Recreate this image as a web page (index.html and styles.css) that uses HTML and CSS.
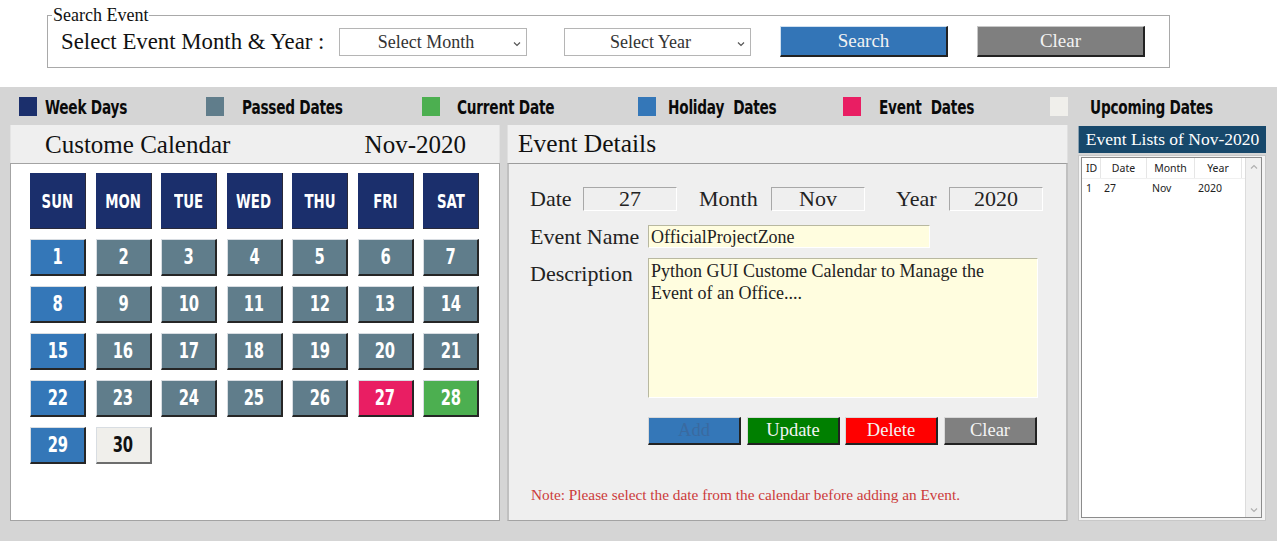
FILE: index.html
```html
<!DOCTYPE html>
<html>
<head>
<meta charset="utf-8">
<title>Custome Calendar</title>
<link rel="stylesheet" href="styles.css">
</head>
<body>
<div class="top">
  <fieldset class="search">
    <legend>Search Event</legend>
    <div class="search-row">
      <span class="search-label">Select Event Month &amp; Year :</span>
      <div class="select sel-month"><span>Select Month</span><svg class="caret" viewBox="0 0 8 6" width="8" height="6"><path d="M1 1.5 L4 4.5 L7 1.5" fill="none" stroke="#555" stroke-width="1.2"/></svg></div>
      <div class="select sel-year"><span>Select Year</span><svg class="caret" viewBox="0 0 8 6" width="8" height="6"><path d="M1 1.5 L4 4.5 L7 1.5" fill="none" stroke="#555" stroke-width="1.2"/></svg></div>
      <button class="btn btn-search">Search</button>
      <button class="btn btn-clear">Clear</button>
    </div>
  </fieldset>
</div>

<div class="lower">
  <div class="legend">
    <div class="lg lg1"><span class="sq c-week"></span><span class="lg-text">Week Days</span></div>
    <div class="lg lg2"><span class="sq c-passed"></span><span class="lg-text">Passed Dates</span></div>
    <div class="lg lg3"><span class="sq c-current"></span><span class="lg-text">Current Date</span></div>
    <div class="lg lg4"><span class="sq c-holiday"></span><span class="lg-text">Holiday&nbsp; Dates</span></div>
    <div class="lg lg5"><span class="sq c-event"></span><span class="lg-text">Event&nbsp; Dates</span></div>
    <div class="lg lg6"><span class="sq c-upcoming"></span><span class="lg-text">Upcoming Dates</span></div>
  </div>

  <div class="main">
    <section class="panel cal">
      <div class="cal-head">
        <span class="cal-title">Custome Calendar</span>
        <span class="cal-month">Nov-2020</span>
      </div>
      <div class="cal-body">
        <div class="grid">
          <div class="wd"><span>SUN</span></div><div class="wd"><span>MON</span></div><div class="wd"><span>TUE</span></div><div class="wd"><span>WED</span></div><div class="wd"><span>THU</span></div><div class="wd"><span>FRI</span></div><div class="wd"><span>SAT</span></div>
          <div class="d c-holiday"><span>1</span></div><div class="d c-passed"><span>2</span></div><div class="d c-passed"><span>3</span></div><div class="d c-passed"><span>4</span></div><div class="d c-passed"><span>5</span></div><div class="d c-passed"><span>6</span></div><div class="d c-passed"><span>7</span></div>
          <div class="d c-holiday"><span>8</span></div><div class="d c-passed"><span>9</span></div><div class="d c-passed"><span>10</span></div><div class="d c-passed"><span>11</span></div><div class="d c-passed"><span>12</span></div><div class="d c-passed"><span>13</span></div><div class="d c-passed"><span>14</span></div>
          <div class="d c-holiday"><span>15</span></div><div class="d c-passed"><span>16</span></div><div class="d c-passed"><span>17</span></div><div class="d c-passed"><span>18</span></div><div class="d c-passed"><span>19</span></div><div class="d c-passed"><span>20</span></div><div class="d c-passed"><span>21</span></div>
          <div class="d c-holiday"><span>22</span></div><div class="d c-passed"><span>23</span></div><div class="d c-passed"><span>24</span></div><div class="d c-passed"><span>25</span></div><div class="d c-passed"><span>26</span></div><div class="d c-event"><span>27</span></div><div class="d c-current"><span>28</span></div>
          <div class="d c-holiday"><span>29</span></div><div class="d c-upcoming"><span>30</span></div>
        </div>
      </div>
    </section>

    <section class="panel details">
      <div class="det-head">Event Details</div>
      <div class="det-body">
        <div class="row-date">
          <span class="lbl l-date">Date</span><span class="field">27</span>
          <span class="lbl l-month">Month</span><span class="field">Nov</span>
          <span class="lbl l-year">Year</span><span class="field">2020</span>
        </div>
        <div class="row-name">
          <span class="lbl l-name">Event Name</span>
          <div class="input name-input">OfficialProjectZone</div>
        </div>
        <div class="row-desc">
          <span class="lbl l-desc">Description</span>
          <div class="input desc-input">Python GUI Custome Calendar to Manage the Event of an Office....</div>
        </div>
        <div class="actions">
          <button class="abtn a-add">Add</button>
          <button class="abtn a-update">Update</button>
          <button class="abtn a-delete">Delete</button>
          <button class="abtn a-clear">Clear</button>
        </div>
        <p class="note">Note: Please select the date from the calendar before adding an Event.</p>
      </div>
    </section>

    <section class="panel list">
      <div class="list-head">Event Lists of Nov-2020</div>
      <div class="list-body">
        <div class="tree">
          <div class="table">
            <div class="th"><span class="col c1">ID</span><span class="col c2 ctr">Date</span><span class="col c3 ctr">Month</span><span class="col c4 ctr">Year</span></div>
            <div class="tr"><span class="col c1">1</span><span class="col c2">27</span><span class="col c3">Nov</span><span class="col c4">2020</span></div>
          </div>
          <div class="scroll">
            <svg viewBox="0 0 8 6" width="8" height="6"><path d="M1 4.5 L4 1.5 L7 4.5" fill="none" stroke="#b0b0b0" stroke-width="1.2"/></svg>
            <svg viewBox="0 0 8 6" width="8" height="6"><path d="M1 1.5 L4 4.5 L7 1.5" fill="none" stroke="#b0b0b0" stroke-width="1.2"/></svg>
          </div>
        </div>
      </div>
    </section>
  </div>
</div>
</body>
</html>
```

FILE: styles.css
```css
* { box-sizing: border-box; }
html, body { margin: 0; padding: 0; }
body {
  width: 1277px;
  height: 541px;
  overflow: hidden;
  background: #d5d5d5;
  font-family: "Liberation Serif", "DejaVu Serif", serif;
  color: #111;
}

/* ---------- top search ---------- */
.top {
  background: #ffffff;
  height: 87px;
  padding: 7px 0 0 47px;
}
.search {
  margin: 0;
  width: 1123px;
  height: 61px;
  border: 1px solid #a9a9a9;
  padding: 0 0 0 13px;
}
.search legend {
  font-size: 18px;
  padding: 0 1px;
  margin-left: -9px;
  color: #111;
  line-height: 16px;
}
.search-row {
  display: flex;
  align-items: center;
  height: 44px;
  margin-top: -3px;
}
.search-label {
  font-size: 22.8px;
  width: 278px;
}
.select {
  height: 28px;
  border: 1px solid #b5b5b5;
  background: #fff;
  display: flex;
  align-items: center;
  justify-content: center;
  position: relative;
  font-size: 18px;
  color: #333;
}
.select span { margin-left: -14px; }
.select .caret { position: absolute; right: 5px; top: 12px; }
.sel-month { width: 188px; }
.sel-year { width: 187px; margin-left: 37px; }
.btn {
  height: 31px;
  width: 168px;
  border: none;
  border-right: 2px solid #222;
  border-bottom: 2px solid #222;
  border-top: 1px solid #cfe0f0;
  border-left: 1px solid #cfe0f0;
  font-family: "Liberation Serif", serif;
  font-size: 19px;
  color: #f2f2f2;
  padding: 0;
  margin-top: -1px;
}
.btn-search { background: #3375b7; margin-left: 29px; }
.btn-clear { background: #7f7f7f; margin-left: 29px; border-top-color: #c8c8c8; border-left-color: #c8c8c8; }

/* ---------- legend ---------- */
.legend {
  display: flex;
  align-items: center;
  height: 38px;
  padding: 1px 0 0 19px;
}
.lg { display: flex; align-items: center; }
.sq { width: 18px; height: 19px; display: inline-block; flex: none; }
.lg-text {
  font-family: "DejaVu Sans Condensed", "Liberation Sans", sans-serif;
  font-weight: bold;
  font-size: 20px;
  color: #0a0a0a;
  transform: scaleX(0.76);
  transform-origin: left center;
  display: inline-block;
  white-space: nowrap;
  letter-spacing: -0.3px;
}
.lg1 { width: 187px; } .lg1 .lg-text { margin-left: 8px; }
.lg2 { width: 216px; } .lg2 .lg-text { margin-left: 18px; }
.lg3 { width: 216px; } .lg3 .lg-text { margin-left: 17px; }
.lg4 { width: 205px; } .lg4 .lg-text { margin-left: 12px; }
.lg5 { width: 207px; } .lg5 .lg-text { margin-left: 18px; }
.lg6 { width: 200px; } .lg6 .lg-text { margin-left: 22px; }

.c-week { background: #1b2f6c; }
.c-passed { background: #607d8b; }
.c-current { background: #4caf50; }
.c-holiday { background: #3477b8; }
.c-event { background: #e91e63; }
.c-upcoming { background: #f0efeb; }

/* ---------- main panels ---------- */
.main {
  display: flex;
  padding-left: 10px;
  height: 396px;
}
.panel { display: flex; flex-direction: column; }

.cal { width: 490px; }
.cal-head {
  height: 38px;
  background: #efefef;
  display: flex;
  align-items: center;
  justify-content: space-between;
  padding: 2px 33px 0 34px;
  font-size: 25px;
  border-left: 1px solid #e4e4e4;
  border-right: 1px solid #e4e4e4;
}
.cal-body {
  flex: 1;
  background: #ffffff;
  border: 1px solid #a3a3a3;
  padding: 9px 0 0 19px;
}
.grid {
  display: grid;
  grid-template-columns: repeat(7, 56px);
  grid-template-rows: 56px repeat(5, 37px);
  column-gap: 9.5px;
  row-gap: 10px;
}
.wd, .d {
  display: flex;
  align-items: center;
  justify-content: center;
  font-family: "DejaVu Sans Condensed", "Liberation Sans", sans-serif;
  font-weight: bold;
  color: #ffffff;
}
.wd span, .d span { display: inline-block; }
.wd {
  background: #1b2f6c;
  font-size: 20px;
  border-right: 1px solid #2a2a3a;
  border-bottom: 1px solid #2a2a3a;
}
.wd span { transform: scaleX(0.74); }
.d {
  font-size: 21px;
  border-top: 1px solid #d8dde2;
  border-left: 1px solid #d8dde2;
  border-right: 2px solid #262626;
  border-bottom: 2px solid #262626;
}
.d span { transform: scaleX(0.78); letter-spacing: -0.5px; }
.d.c-upcoming { color: #111; border-right-color: #6d6d6d; border-bottom-color: #6d6d6d; }

/* ---------- details ---------- */
.details { width: 561px; margin-left: 7px; }
.det-head {
  height: 38px;
  background: #efefef;
  display: flex;
  align-items: center;
  padding: 0 0 0 10px;
  font-size: 25.5px;
  border-left: 1px solid #e0e0e0;
  border-right: 1px solid #e0e0e0;
}
.det-body {
  flex: 1;
  background: #efefef;
  border: 1px solid #a3a3a3;
  border-left-width: 2px;
  border-right-width: 2px;
  border-left-color: #c0c0c0;
  border-right-color: #c0c0c0;
  border-top-color: #9c9c9c;
  padding: 23px 0 0 21px;
  display: flex;
  flex-direction: column;
}
.lbl { font-size: 22px; color: #222; white-space: nowrap; }
.row-date { display: flex; align-items: center; height: 24px; }
.l-date { width: 53px; }
.l-month { width: 72px; margin-left: 22px; }
.l-year { width: 53px; margin-left: 31px; }
.field {
  height: 24px;
  width: 94px;
  border-top: 1px solid #a8a8a8;
  border-left: 1px solid #a8a8a8;
  border-right: 1px solid #ffffff;
  border-bottom: 1px solid #ffffff;
  display: flex;
  align-items: center;
  justify-content: center;
  font-size: 22px;
  color: #222;
}

.row-name { display: flex; align-items: center; margin-top: 14px; height: 23px; }
.l-name { width: 118px; }
.input {
  background: #fffddf;
  border-top: 1px solid #b8b8a0;
  border-left: 1px solid #b8b8a0;
  border-right: 1px solid #ffffff;
  border-bottom: 1px solid #ffffff;
  font-size: 18px;
  color: #222;
}
.name-input { width: 282px; height: 23px; padding: 1px 0 0 2px; line-height: 20px; }
.row-desc { display: flex; margin-top: 10px; }
.l-desc { width: 118px; padding-top: 3px; }
.desc-input { width: 390px; height: 140px; padding: 1px 22px 0 2px; line-height: 22px; }

.actions { display: flex; margin: 19px 0 0 118px; }
.abtn {
  width: 93px;
  height: 28px;
  border: none;
  border-top: 1px solid #d8d8d8;
  border-left: 1px solid #d8d8d8;
  border-right: 2px solid #222;
  border-bottom: 2px solid #222;
  font-family: "Liberation Serif", serif;
  font-size: 18.5px;
  color: #f4f4f4;
  padding: 0;
}
.a-add { background: #3477b8; color: #3a6aa0; }
.a-update { background: #007f00; margin-left: 6px; }
.a-delete { background: #ff0000; margin-left: 5px; }
.a-clear { background: #808080; margin-left: 6px; }
.note {
  margin: 41px 0 0 1px;
  font-size: 15.3px;
  color: #cc3b3b;
  white-space: nowrap;
}

/* ---------- list ---------- */
.list { width: 188px; margin-left: 10px; }
.list-head {
  height: 27px;
  margin-top: 1px;
  background: #17486b;
  color: #ffffff;
  font-size: 17.5px;
  display: flex;
  align-items: center;
  justify-content: center;
  border-left: 1px solid #8aa0b0;
  white-space: nowrap;
}
.list-body {
  flex: 1;
  margin-top: 2px;
  background: #f4f4f4;
  border: 1px solid #c8c8c8;
  padding: 1px 3px 2px 2px;
}
.tree {
  height: 100%;
  border: 1px solid #8c8c8c;
  display: flex;
  background: #ffffff;
}
.table { flex: 1; font-family: "Noto Sans", "Open Sans", sans-serif; font-size: 10.5px; color: #222; }
.th { display: flex; height: 21px; align-items: center; border-bottom: 1px solid #f0f0f0; }
.th .col { border-right: 1px solid #e6e6e6; height: 100%; display: flex; align-items: center; }
.tr { display: flex; height: 18px; align-items: center; }
.col { display: inline-block; padding-left: 4px; }
.ctr { justify-content: center; padding-left: 0; }
.c1 { width: 19px; }
.c2 { width: 46px; }
.c3 { width: 48px; }
.c4 { width: 47px; }
.tr .c2 { padding-left: 3px; }
.tr .c3 { padding-left: 5px; }
.tr .c4 { padding-left: 3px; }
.scroll {
  width: 16px;
  background: #f0f0f0;
  border-left: 1px solid #dcdcdc;
  display: flex;
  flex-direction: column;
  justify-content: space-between;
  align-items: center;
  padding: 6px 0 4px;
}
```
